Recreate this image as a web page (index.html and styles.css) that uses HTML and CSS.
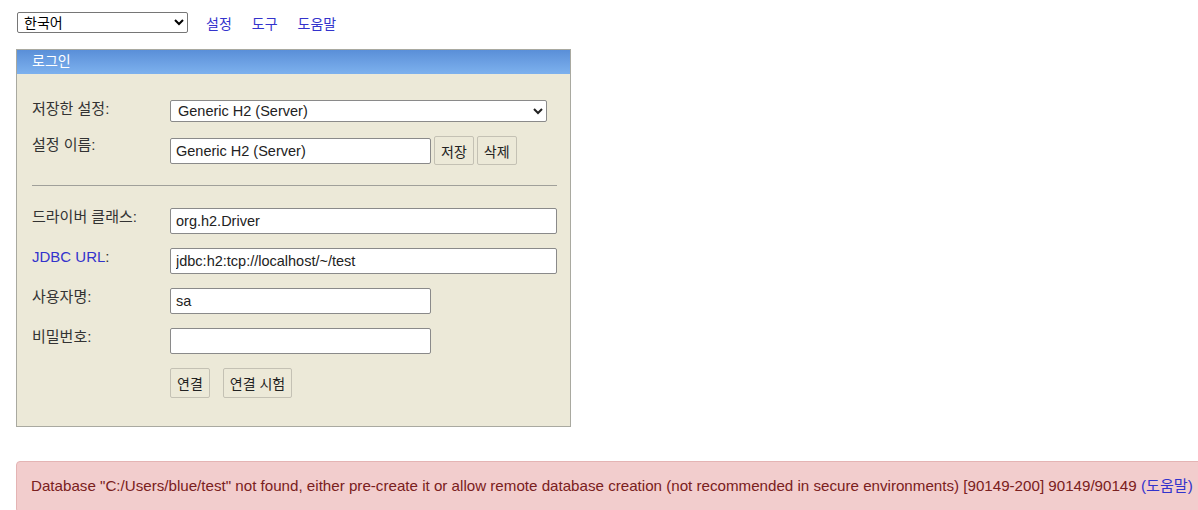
FILE: index.html
```html
<!DOCTYPE html>
<html lang="ko">
<head>
  <meta charset="UTF-8" />
  <title>H2 Console</title>
  <link rel="stylesheet" href="styles.css">
</head>
<body>
  <div class="toolbar">
    <select class="lang-select">
      <option>한국어</option>
    </select>
    <a href="#" class="top-link">설정</a>
    <a href="#" class="top-link">도구</a>
    <a href="#" class="top-link">도움말</a>
  </div>

  <div class="login">
    <div class="login-title">로그인</div>
    <div class="login-body">
      <div class="row">
        <label>저장한 설정:</label>
        <select class="field wide-select"><option>Generic H2 (Server)</option></select>
      </div>
      <div class="row">
        <label>설정 이름:</label>
        <div class="inline">
          <input class="field short" type="text" value="Generic H2 (Server)" />
          <button class="btn small">저장</button>
          <button class="btn small">삭제</button>
        </div>
      </div>

      <hr class="divider" />

      <div class="row">
        <label>드라이버 클래스:</label>
        <input class="field long" type="text" value="org.h2.Driver" />
      </div>
      <div class="row">
        <label><a href="#" class="label-link">JDBC URL</a>:</label>
        <input class="field long" type="text" value="jdbc:h2:tcp://localhost/~/test" />
      </div>
      <div class="row">
        <label>사용자명:</label>
        <input class="field short" type="text" value="sa" />
      </div>
      <div class="row">
        <label>비밀번호:</label>
        <input class="field short" type="password" value="" />
      </div>
      <div class="row">
        <span></span>
        <div class="inline actions">
          <button class="btn">연결</button>
          <button class="btn">연결 시험</button>
        </div>
      </div>
    </div>
  </div>

  <div class="error">Database "C:/Users/blue/test" not found, either pre-create it or allow remote database creation (not recommended in secure environments) [90149-200] 90149/90149 <a href="#" class="label-link">(도움말)</a></div>
</body>
</html>
```

FILE: styles.css
```css
body {
  margin: 0;
  background: #fff;
  color: #222;
  font-family: Arial, "Liberation Sans", "Noto Sans CJK KR", sans-serif;
  font-size: 14px;
  overflow: hidden;
}

.toolbar {
  display: flex;
  align-items: center;
  padding: 12px 17px 0;
  height: 21px;
}

.lang-select {
  width: 171px;
  height: 21px;
  font-family: inherit;
  font-size: 14px;
  margin-right: 18px;
  border: 1px solid #767676;
  border-radius: 2px;
  background: #fff;
  padding: 0 2px;
}

.top-link {
  color: #3333cc;
  text-decoration: none;
  margin-right: 20px;
}

.login {
  margin: 16px 0 0 16px;
  width: 553px;
  border: 1px solid #a9a9a0;
  background: #ece9d8;
}

.login-title {
  height: 24px;
  line-height: 23px;
  padding-left: 15px;
  color: #fff;
  background: linear-gradient(to bottom, #5a8fd8, #7db1ee);
}

.login-body {
  padding: 26px 13px 14px 15px;
}

.row {
  display: grid;
  grid-template-columns: 138px 1fr;
  align-items: start;
  margin-bottom: 14px;
}

.row label {
  color: #333;
  font-size: 15px;
  line-height: 18px;
}

.label-link {
  color: #3333cc;
  text-decoration: none;
}

.inline {
  display: flex;
  gap: 3px;
  align-items: center;
}

.field {
  box-sizing: border-box;
  height: 26px;
  font-family: inherit;
  font-size: 14.5px;
  border: 1px solid #8a8a8a;
  border-radius: 2px;
  background: #fff;
  padding: 2px 5px;
  color: #222;
}

.wide-select {
  width: 377px;
  height: 22px;
  padding: 0 3px;
}

.short {
  width: 261px;
}

.long {
  width: 387px;
}

.btn {
  height: 30px;
  font-family: inherit;
  font-size: 14px;
  background: #ece9d8;
  border: 1px solid #c4c1b4;
  border-radius: 2px;
  padding: 0 6px;
  color: #222;
}

.btn.small {
  height: 29px;
}

.actions {
  gap: 13px;
}

.divider {
  border: 0;
  border-top: 1px solid #a0a09a;
  margin: 20px 0 22px;
  width: 525px;
}

.error {
  display: inline-block;
  white-space: nowrap;
  margin: 34px 0 0 16px;
  padding: 11px 30px 17px 14px;
  background: #f2cdcd;
  border: 1px solid #e4b4b4;
  border-radius: 4px;
  color: #7a2020;
  font-size: 15.15px;
}
```
